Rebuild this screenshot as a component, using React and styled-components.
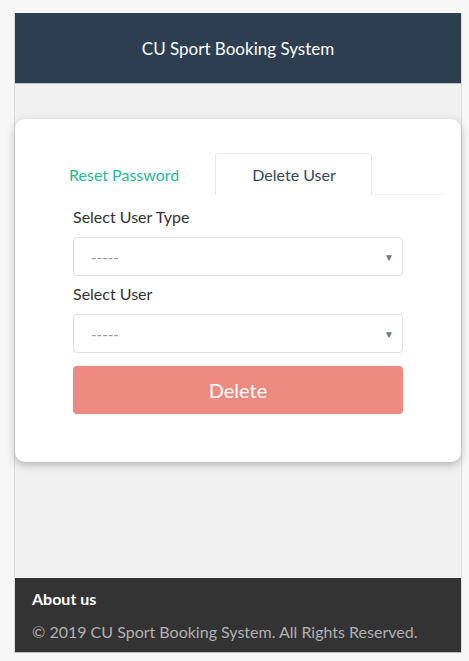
import React from 'react'
import styled, { createGlobalStyle } from 'styled-components'

const Global = createGlobalStyle`
body{
    margin: 0;
    background: #f7f7f7;
    font-family: Lato, "Open Sans", sans-serif;
}
`

const Frame = styled.div`
width: 446px;
margin: 13px 0 0 14px;
border-left: 1px solid #dcdcdc;
border-right: 1px solid #dcdcdc;
background: #f1f1f1;
min-height: 640px;
display: flex;
flex-direction: column;
`

const Header = styled.header`
height: 70px;
background: #2c3e50;
border-bottom: 1px solid #b9c0c8;
display: flex;
align-items: center;
justify-content: center;
color: #fff;
font-size: 17px;
`

const Main = styled.main`
flex: 1;
padding-top: 35px;
`

const Card = styled.div`
background: #fff;
border-radius: 10px;
box-shadow: 0 3px 8px rgba(0,0,0,.25);
padding: 34px 17px 48px;
`

const Tabs = styled.div`
display: flex;
border-bottom: 1px solid #eef1f3;
`

const Tab = styled.div`
height: 41px;
padding: 0 35px 0 36px;
display: flex;
align-items: center;
font-size: 16px;
color: ${p => p.active ? '#34495e' : '#1abc9c'};
border: 1px solid ${p => p.active ? '#e6eaed' : 'transparent'};
border-bottom: none;
border-radius: 4px 4px 0 0;
margin-bottom: -1px;
background: #fff;
`

const Form = styled.div`
padding: 12px 41px 0 41px;
display: flex;
flex-direction: column;
`

const Label = styled.div`
font-size: 16px;
color: #333;
line-height: 20px;
margin-bottom: 10px;
`

const Select = styled.div`
height: 37px;
border: 1px solid #dde1e4;
border-radius: 4px;
display: flex;
align-items: center;
justify-content: space-between;
padding: 0 8px 0 17px;
color: #999;
font-size: 15px;
margin-bottom: 8px;
span.arrow{
    font-size: 10px;
    color: #6f7b7f;
}
`

const Button = styled.button`
margin-top: 5px;
height: 48px;
border: none;
border-radius: 4px;
background: #ef8a80;
color: #fff;
font-family: Lato, "Open Sans", sans-serif;
font-size: 20px;
`

const Footer = styled.footer`
background: #333;
padding: 11px 17px 10px;
border-bottom: 1px solid #bbb;
h4{
    margin: 0;
    color: #fff;
    font-size: 16px;
    font-weight: bold;
    line-height: 20px;
}
p{
    margin: 13px 0 0;
    color: #b0b0b0;
    font-size: 16px;
    line-height: 20px;
}
`

const App = () => {
    return (
        <>
            <Global />
            <Frame>
                <Header>CU Sport Booking System</Header>
                <Main>
                    <Card>
                        <Tabs>
                            <Tab>Reset Password</Tab>
                            <Tab active>Delete User</Tab>
                        </Tabs>
                        <Form>
                            <Label>Select User Type</Label>
                            <Select><span>-----</span><span className='arrow'>▼</span></Select>
                            <Label>Select User</Label>
                            <Select><span>-----</span><span className='arrow'>▼</span></Select>
                            <Button>Delete</Button>
                        </Form>
                    </Card>
                </Main>
                <Footer>
                    <h4>About us</h4>
                    <p>© 2019 CU Sport Booking System. All Rights Reserved.</p>
                </Footer>
            </Frame>
        </>
    )
}

export default App
